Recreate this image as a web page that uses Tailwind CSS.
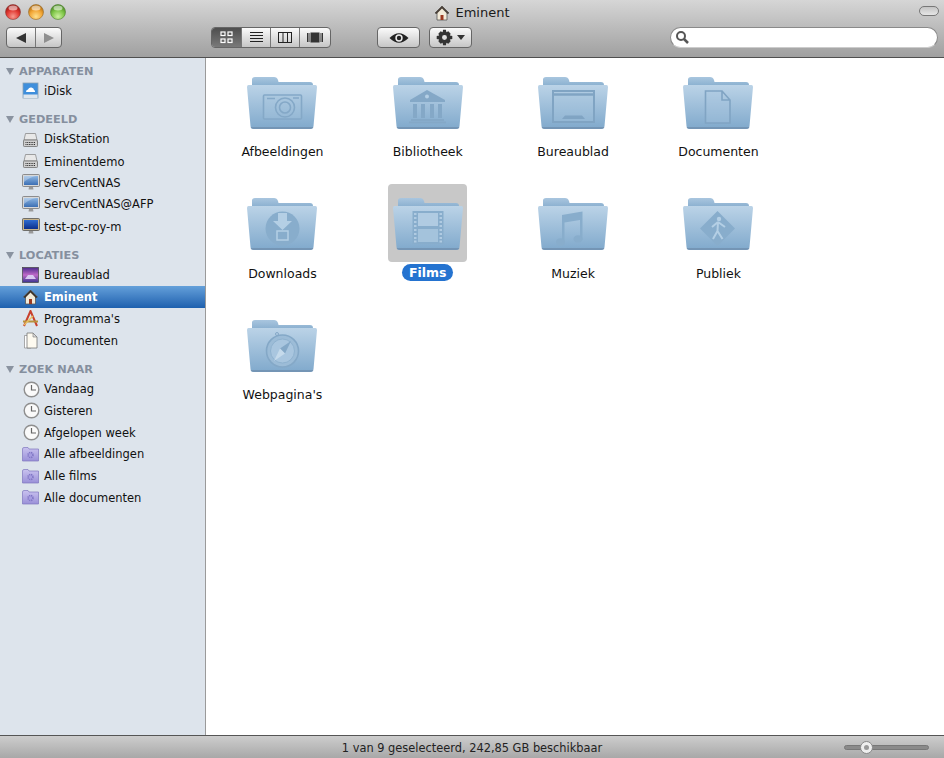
<!DOCTYPE html>
<html>
<head>
    <title>Eminent</title>
    <script src="https://cdn.jsdelivr.net/npm/@tailwindcss/browser@4"></script>
</head>

<body class="w-[944px] h-[758px] overflow-hidden bg-white text-[#111] font-['DejaVu_Sans',sans-serif] flex flex-col">

<!-- shared gradients and icons -->
<svg width="0" height="0" class="absolute">
    <defs>
        <linearGradient id="folderFront" x1="0" y1="0" x2="0" y2="1">
            <stop offset="0" stop-color="#bbd3e7"/>
            <stop offset="1" stop-color="#80a9cc"/>
        </linearGradient>
        <linearGradient id="folderBack" x1="0" y1="0" x2="0" y2="1">
            <stop offset="0" stop-color="#a9c6df"/>
            <stop offset="1" stop-color="#7fa8ca"/>
        </linearGradient>
        <radialGradient id="red" cx="0.5" cy="0.8" r="0.7">
            <stop offset="0" stop-color="#f79a8e"/>
            <stop offset="0.6" stop-color="#e23a33"/>
            <stop offset="1" stop-color="#a01a16"/>
        </radialGradient>
        <radialGradient id="amber" cx="0.5" cy="0.8" r="0.7">
            <stop offset="0" stop-color="#fde08c"/>
            <stop offset="0.6" stop-color="#f2a636"/>
            <stop offset="1" stop-color="#b87212"/>
        </radialGradient>
        <radialGradient id="green" cx="0.5" cy="0.8" r="0.7">
            <stop offset="0" stop-color="#cdf0a0"/>
            <stop offset="0.6" stop-color="#7fc648"/>
            <stop offset="1" stop-color="#4f8e26"/>
        </radialGradient>
        <linearGradient id="screen" x1="0" y1="0" x2="0" y2="1">
            <stop offset="0" stop-color="#8db6e2"/>
            <stop offset="1" stop-color="#3c6fb4"/>
        </linearGradient>
        <linearGradient id="screenDark" x1="0" y1="0" x2="0" y2="1">
            <stop offset="0" stop-color="#2f6cd0"/>
            <stop offset="1" stop-color="#0c2f8c"/>
        </linearGradient>
        <linearGradient id="smart" x1="0" y1="0" x2="0" y2="1">
            <stop offset="0" stop-color="#c9c2ef"/>
            <stop offset="1" stop-color="#9a90d8"/>
        </linearGradient>
        <linearGradient id="desk" x1="0" y1="0" x2="0" y2="1">
            <stop offset="0" stop-color="#4a2a8c"/>
            <stop offset="0.5" stop-color="#c06ac8"/>
            <stop offset="1" stop-color="#3a3390"/>
        </linearGradient>

        <symbol id="folder" viewBox="0 0 70 52">
            <path d="M5 7 L5 2.500 Q5 0 8 0 L27 0 Q30 0 31 3 L31.500 5 L63 5 Q66 5 66 8 L66 12 L5 12 Z" fill="url(#folderBack)"/>
            <path d="M1.500 8 L68.500 8 Q70 8 70 10 L66.500 49 Q66.300 52 63 52 L7 52 Q3.700 52 3.500 49 L0 10 Q0 8 1.500 8 Z" fill="url(#folderFront)"/>
            <path d="M3.600 50 Q4 52 7 52 L63 52 Q66 52 66.400 50 Z" fill="#7495b5"/>
        </symbol>

        <symbol id="clock" viewBox="0 0 17 17">
            <circle cx="8.500" cy="8.500" r="7.300" fill="#fafafa" stroke="#8e8e8e" stroke-width="1.400"/>
            <path d="M8.500 4 V9 H13" fill="none" stroke="#666" stroke-width="1.200"/>
        </symbol>
        <symbol id="nas" viewBox="0 0 16 16">
            <path d="M3 1.500 H13 L14.500 8 H1.500 Z" fill="#e8e8e8" stroke="#8a8a8a" stroke-width="0.800"/>
            <rect x="1" y="8" width="14" height="6.500" rx="0.800" fill="#cfcfcf" stroke="#6f6f6f" stroke-width="0.800"/>
            <path d="M3 10.500 H13 M3 12.500 H13" stroke="#333" stroke-width="1" stroke-dasharray="1 0.700"/>
        </symbol>
        <symbol id="imac" viewBox="0 0 18 17">
            <rect x="0.500" y="0.500" width="17" height="12" rx="1" fill="#d8d8d8" stroke="#777" stroke-width="0.800"/>
            <rect x="2" y="2" width="14" height="9" fill="url(#screen)"/>
            <path d="M2 8 Q8 3 14 2 H2 Z" fill="#fff" opacity="0.300"/>
            <path d="M7 13 H11 L11.500 15.500 H6.500 Z" fill="#999"/>
        </symbol>
        <symbol id="smartFolder" viewBox="0 0 17 16">
            <path d="M0.500 3 Q0.500 1.500 2 1.500 H6 L7 3 H16.500 V15 H0.500 Z" fill="url(#smart)" stroke="#8077be" stroke-width="0.700"/>
            <circle cx="8.500" cy="9" r="2.500" fill="#a69de0" stroke="#7f75c4" stroke-width="1.500" stroke-dasharray="1.200 0.800"/>
        </symbol>
    </defs>
</svg>

<!-- TITLE BAR -->
<div class="h-[58px] shrink-0 border-b border-[#4f4f4f] bg-gradient-to-b from-[#d6d6d6] to-[#a0a0a0]">
    <div class="h-[27px] grid grid-cols-[1fr_auto_1fr] items-start">
        <div class="flex gap-[6.500px] pl-[5px] pt-[4px]">
            <svg width="16" height="16"><circle cx="8" cy="8" r="7.500" fill="url(#red)" stroke="#8a3a36" stroke-width="0.600"/><ellipse cx="8" cy="4" rx="4.500" ry="2.500" fill="#fff" opacity="0.550"/></svg>
            <svg width="16" height="16"><circle cx="8" cy="8" r="7.500" fill="url(#amber)" stroke="#966a2a" stroke-width="0.600"/><ellipse cx="8" cy="4" rx="4.500" ry="2.500" fill="#fff" opacity="0.550"/></svg>
            <svg width="16" height="16"><circle cx="8" cy="8" r="7.500" fill="url(#green)" stroke="#4f7f32" stroke-width="0.600"/><ellipse cx="8" cy="4" rx="4.500" ry="2.500" fill="#fff" opacity="0.550"/></svg>
        </div>
        <div class="flex items-center gap-[5px] h-[24px] pt-[1px] text-[13px] text-[#1a1a1a]">
            <svg width="16" height="16" viewBox="0 0 16 16">
                <path d="M8 1 L15 8 L13 8 V15 H3 V8 H1 Z" fill="#f2ead8" stroke="#555" stroke-width="0.800"/>
                <path d="M8 1 L15 8 L13.500 9 L8 3.500 L2.500 9 L1 8 Z" fill="#4a4038"/>
                <rect x="6.500" y="10" width="3" height="5" fill="#9c3a20"/>
            </svg>
            <span>Eminent</span>
        </div>
        <div class="flex justify-end pr-[5px] pt-[6px]">
            <div class="w-[20px] h-[10px] rounded-full border border-[#777] bg-gradient-to-b from-[#c4c4c4] to-[#e6e6e6]"></div>
        </div>
    </div>

    <!-- TOOLBAR -->
    <div class="h-[21px] flex pl-[6px]">
        <div class="flex w-[56px] h-full rounded-[4px] border border-[#666] bg-gradient-to-b from-[#fbfbfb] to-[#c6c6c6] divide-x divide-[#777]">
            <div class="w-[29px] flex items-center justify-center">
                <svg width="10" height="10" viewBox="0 0 10 10"><path d="M0 5 L10 0 V10 Z" fill="#333"/></svg>
            </div>
            <div class="flex-1 flex items-center justify-center">
                <svg width="10" height="10" viewBox="0 0 10 10"><path d="M10 5 L0 0 V10 Z" fill="#8f8f8f"/></svg>
            </div>
        </div>

        <div class="ml-[149px] flex w-[120px] h-full rounded-[4px] border border-[#666] overflow-hidden bg-gradient-to-b from-[#fbfbfb] to-[#c6c6c6] divide-x divide-[#777]">
            <div class="w-[30px] flex items-center justify-center bg-gradient-to-b from-[#4e4e4e] to-[#7a7a7a]">
                <svg width="13" height="13" viewBox="0 0 13 13" fill="none" stroke="#fff" stroke-width="1.200"><rect x="1" y="1" width="4" height="3.500"/><rect x="8" y="1" width="4" height="3.500"/><rect x="1" y="8" width="4" height="3.500"/><rect x="8" y="8" width="4" height="3.500"/></svg>
            </div>
            <div class="w-[29px] flex items-center justify-center">
                <svg width="13" height="13" viewBox="0 0 13 13" stroke="#222" stroke-width="1"><path d="M0 1.500 H13 M0 4.500 H13 M0 7.500 H13 M0 10.500 H13"/></svg>
            </div>
            <div class="w-[29px] flex items-center justify-center">
                <svg width="14" height="11" viewBox="0 0 14 11" fill="none" stroke="#222" stroke-width="1"><rect x="0.500" y="0.500" width="13" height="10"/><path d="M5 0.500 V10.500 M9.500 0.500 V10.500"/></svg>
            </div>
            <div class="flex-1 flex items-center justify-center">
                <svg width="16" height="11" viewBox="0 0 16 11"><rect x="3.500" y="0.500" width="9" height="10" fill="#333"/><path d="M0.500 1 V10 M2 1 V10 M14 1 V10 M15.500 1 V10" stroke="#333" stroke-width="1"/></svg>
            </div>
        </div>

        <div class="ml-[46px] w-[43px] h-full rounded-[4px] border border-[#666] bg-gradient-to-b from-[#fbfbfb] to-[#c6c6c6] flex items-center justify-center">
            <svg width="20" height="12" viewBox="0 0 20 12">
                <path d="M0.500 6 Q10 -3.500 19.500 6 Q10 15.500 0.500 6 Z" fill="#222"/>
                <circle cx="10" cy="6" r="3.700" fill="#eee"/>
                <circle cx="10" cy="6" r="2.200" fill="#222"/>
            </svg>
        </div>

        <div class="ml-[9px] w-[43px] h-full rounded-[4px] border border-[#666] bg-gradient-to-b from-[#fbfbfb] to-[#c6c6c6] flex items-center justify-center gap-[4px]">
            <svg width="17" height="17" viewBox="0 0 24 24">
                <path fill="#333" fill-rule="evenodd" d="M10 1 H14 L14.700 4.500 L17.400 3.300 L20.700 6.600 L19.500 9.300 L23 10 V14 L19.500 14.700 L20.700 17.400 L17.400 20.700 L14.700 19.500 L14 23 H10 L9.300 19.500 L6.600 20.700 L3.300 17.400 L4.500 14.700 L1 14 V10 L4.500 9.300 L3.300 6.600 L6.600 3.300 L9.300 4.500 Z M12 8.500 A3.500 3.500 0 1 0 12 15.500 A3.500 3.500 0 1 0 12 8.500 Z"/>
            </svg>
            <svg width="8" height="5" viewBox="0 0 8 5"><path d="M0 0 H8 L4 5 Z" fill="#333"/></svg>
        </div>

        <div class="ml-[198px] w-[268px] h-full rounded-full bg-white border border-[#8a8a8a] border-b-[#ccc] flex items-center pl-[4px]">
            <svg width="15" height="15" viewBox="0 0 15 15" fill="none" stroke="#555" stroke-width="2"><circle cx="6" cy="6" r="4"/><path d="M9 9 L13 13" stroke-width="2.500"/></svg>
        </div>
    </div>
</div>

<div class="flex-1 flex min-h-0">

    <!-- SIDEBAR -->
    <div class="w-[206px] shrink-0 bg-[#dde4ec] border-r border-[#9a9a9a] pt-[4px] text-[11.500px]">

        <div class="h-[18px] flex items-center pl-[6px] gap-[5px] text-[11.300px] font-bold text-[#858f9e]">
            <svg width="8" height="7" viewBox="0 0 8 7"><path d="M0 0 H8 L4 7 Z" fill="#8a93a0"/></svg>
            <span class="pt-[2px]">APPARATEN</span>
        </div>
        <div class="h-[21.700px] flex items-center pl-[22px] gap-[5px]">
            <svg width="17" height="17" viewBox="0 0 17 17">
                <rect x="1" y="1" width="15" height="15" fill="#3f8fdc" stroke="#8aa0b5" stroke-width="0.800"/>
                <rect x="1.400" y="12.500" width="14.200" height="3.500" fill="#dfe6ec"/>
                <path d="M4 10 Q4 7.500 6 7.500 Q7 5 9.500 5.500 Q12 6 12 8 Q13.500 8.500 13 10 Z" fill="#fff"/>
            </svg>
            <span class="pt-[1px]">iDisk</span>
        </div>

        <div class="h-[18px] mt-[9px] flex items-center pl-[6px] gap-[5px] text-[11.300px] font-bold text-[#858f9e]">
            <svg width="8" height="7" viewBox="0 0 8 7"><path d="M0 0 H8 L4 7 Z" fill="#8a93a0"/></svg>
            <span class="pt-[2px]">GEDEELD</span>
        </div>
        <div class="h-[21.700px] flex items-center pl-[22px] gap-[5px]"><svg width="17" height="16"><use href="#nas"/></svg><span class="pt-[1px]">DiskStation</span></div>
        <div class="h-[21.700px] flex items-center pl-[22px] gap-[5px]"><svg width="17" height="16"><use href="#nas"/></svg><span class="pt-[2px]">Eminentdemo</span></div>
        <div class="h-[21.700px] flex items-center pl-[22px] gap-[4px]"><svg width="18" height="17"><use href="#imac"/></svg><span class="pt-[2px]">ServCentNAS</span></div>
        <div class="h-[21.700px] flex items-center pl-[22px] gap-[4px]"><svg width="18" height="17"><use href="#imac"/></svg><span class="pt-[1px]">ServCentNAS@AFP</span></div>
        <div class="h-[21.700px] flex items-center pl-[22px] gap-[4px]">
            <svg width="18" height="17" viewBox="0 0 18 17">
                <rect x="0.500" y="0.500" width="17" height="12" rx="1" fill="#c8b48a" stroke="#555" stroke-width="0.800"/>
                <rect x="2" y="2" width="14" height="9" fill="url(#screenDark)"/>
                <path d="M7 13 H11 L11.500 15.500 H6.500 Z" fill="#999"/>
            </svg>
            <span class="pt-[2px]">test-pc-roy-m</span>
        </div>

        <div class="h-[18px] mt-[9px] flex items-center pl-[6px] gap-[5px] text-[11.300px] font-bold text-[#858f9e]">
            <svg width="8" height="7" viewBox="0 0 8 7"><path d="M0 0 H8 L4 7 Z" fill="#8a93a0"/></svg>
            <span class="pt-[2px]">LOCATIES</span>
        </div>
        <div class="h-[21.700px] flex items-center pl-[22px] gap-[5px]">
            <svg width="17" height="16" viewBox="0 0 17 16">
                <rect x="0.500" y="0.500" width="16" height="15" fill="url(#desk)" stroke="#444" stroke-width="0.700"/>
                <path d="M3 12 L6 8 H11 L14 12 Z" fill="#d8c8f0"/>
            </svg>
            <span class="pt-[2px]">Bureaublad</span>
        </div>
        <div class="h-[22px] flex items-center pl-[22px] gap-[5px] bg-gradient-to-b from-[#64a0da] to-[#1d60ae] text-white font-bold">
            <svg width="17" height="16" viewBox="0 0 16 16">
                <path d="M8 1 L15 8 L13 8 V15 H3 V8 H1 Z" fill="#f2ead8" stroke="#555" stroke-width="0.800"/>
                <path d="M8 1 L15 8 L13.500 9 L8 3.500 L2.500 9 L1 8 Z" fill="#3a3028"/>
                <rect x="6.500" y="10" width="3" height="5" fill="#9c3a20"/>
            </svg>
            <span class="pt-[1px]">Eminent</span>
        </div>
        <div class="h-[21.700px] flex items-center pl-[22px] gap-[5px]">
            <svg width="17" height="17" viewBox="0 0 17 17" fill="none">
                <path d="M2 16 L8.500 1 L15 16" stroke="#c8402c" stroke-width="2"/>
                <path d="M1 11.500 H16" stroke="#b8923c" stroke-width="2"/>
                <path d="M2 15 L11 6" stroke="#e8c060" stroke-width="1.500"/>
            </svg>
            <span class="pt-[1px]">Programma's</span>
        </div>
        <div class="h-[21.700px] flex items-center pl-[22px] gap-[5px]">
            <svg width="17" height="17" viewBox="0 0 17 17">
                <path d="M2.500 3.500 H9 L9 16 H2.500 Z" fill="#fff" stroke="#888" stroke-width="0.700"/>
                <path d="M5 1 H11 L15 5 V16 H5 Z" fill="#fdfaf0" stroke="#777" stroke-width="0.800"/>
                <path d="M11 1 V5 H15 Z" fill="#ddd" stroke="#777" stroke-width="0.600"/>
            </svg>
            <span class="pt-[2px]">Documenten</span>
        </div>

        <div class="h-[18px] mt-[9px] flex items-center pl-[6px] gap-[5px] text-[11.300px] font-bold text-[#858f9e]">
            <svg width="8" height="7" viewBox="0 0 8 7"><path d="M0 0 H8 L4 7 Z" fill="#8a93a0"/></svg>
            <span class="pt-[2px]">ZOEK NAAR</span>
        </div>
        <div class="h-[21.700px] flex items-center pl-[23px] gap-[4px]"><svg width="17" height="17"><use href="#clock"/></svg><span class="pt-[2px]">Vandaag</span></div>
        <div class="h-[21.700px] flex items-center pl-[23px] gap-[4px]"><svg width="17" height="17"><use href="#clock"/></svg><span class="pt-[2px]">Gisteren</span></div>
        <div class="h-[21.700px] flex items-center pl-[23px] gap-[4px]"><svg width="17" height="17"><use href="#clock"/></svg><span class="pt-[2px]">Afgelopen week</span></div>
        <div class="h-[21.700px] flex items-center pl-[22px] gap-[5px]"><svg width="17" height="16"><use href="#smartFolder"/></svg><span class="pt-[2px]">Alle afbeeldingen</span></div>
        <div class="h-[21.700px] flex items-center pl-[22px] gap-[5px]"><svg width="17" height="16"><use href="#smartFolder"/></svg><span class="pt-[2px]">Alle films</span></div>
        <div class="h-[21.700px] flex items-center pl-[22px] gap-[5px]"><svg width="17" height="16"><use href="#smartFolder"/></svg><span class="pt-[2px]">Alle documenten</span></div>
    </div>

    <!-- FOLDERS -->
    <div class="flex-1 pl-[3.800px] pt-[4.900px] grid grid-cols-[repeat(4,145.330px)] auto-rows-[121.500px] content-start text-[12.500px]">

        <div class="flex flex-col items-center">
            <div class="w-[79px] h-[78px] pt-[2px] flex items-center justify-center">
                <svg width="70" height="52" viewBox="0 0 70 52">
                    <use href="#folder" width="70" height="52"/>
                    <g fill="none" stroke="#84a8c7" stroke-width="1.600">
                        <rect x="16.500" y="18" width="38" height="24" rx="1" fill="#a9c6df" fill-opacity="0.300"/>
                        <circle cx="38" cy="30.500" r="9.500"/>
                        <circle cx="38" cy="30.500" r="5.500"/>
                        <path d="M20 21.500 H28 M46 21 H52"/>
                    </g>
                </svg>
            </div>
            <div class="h-[17px] mt-[2px] pt-[2px] flex items-center">Afbeeldingen</div>
        </div>

        <div class="flex flex-col items-center">
            <div class="w-[79px] h-[78px] pt-[2px] flex items-center justify-center">
                <svg width="70" height="52" viewBox="0 0 70 52">
                    <use href="#folder" width="70" height="52"/>
                    <g fill="#84a8c7">
                        <path d="M34 13 L52 23 V25 H17 V23 Z"/>
                        <rect x="20" y="27" width="4" height="14"/>
                        <rect x="28" y="27" width="4" height="14"/>
                        <rect x="37" y="27" width="4" height="14"/>
                        <rect x="45" y="27" width="4" height="14"/>
                        <rect x="18" y="42" width="33" height="2"/>
                        <rect x="16" y="44.500" width="37" height="1.800"/>
                    </g>
                    <circle cx="34" cy="19.500" r="2" fill="#b4cfe5"/>
                </svg>
            </div>
            <div class="h-[17px] mt-[2px] pt-[2px] flex items-center">Bibliotheek</div>
        </div>

        <div class="flex flex-col items-center">
            <div class="w-[79px] h-[78px] pt-[2px] flex items-center justify-center">
                <svg width="70" height="52" viewBox="0 0 70 52">
                    <use href="#folder" width="70" height="52"/>
                    <rect x="15" y="14" width="41" height="31" fill="#a9c6df" fill-opacity="0.300" stroke="#80a4c3" stroke-width="2"/>
                    <path d="M15 17.500 H56" stroke="#80a4c3" stroke-width="2.500"/>
                    <path d="M24 42 L27 38.500 H44 L47 42 Z" fill="#80a4c3"/>
                </svg>
            </div>
            <div class="h-[17px] mt-[2px] pt-[2px] flex items-center">Bureaublad</div>
        </div>

        <div class="flex flex-col items-center">
            <div class="w-[79px] h-[78px] pt-[2px] flex items-center justify-center">
                <svg width="70" height="52" viewBox="0 0 70 52">
                    <use href="#folder" width="70" height="52"/>
                    <path d="M22.500 14 H39 L47 23 V46 H22.500 Z M39 14 V23 H47" fill="#a9c6df" fill-opacity="0.350" stroke="#80a4c3" stroke-width="1.600"/>
                </svg>
            </div>
            <div class="h-[17px] mt-[2px] pt-[2px] flex items-center">Documenten</div>
        </div>

        <div class="flex flex-col items-center">
            <div class="w-[79px] h-[78px] pt-[2px] flex items-center justify-center">
                <svg width="70" height="52" viewBox="0 0 70 52">
                    <use href="#folder" width="70" height="52"/>
                    <circle cx="35.500" cy="30.500" r="17" fill="#88adcc"/>
                    <path d="M31 15 H40 V23 H45 L35.500 32 L26 23 H31 Z" fill="#b4cfe5"/>
                    <rect x="30" y="33" width="11" height="9" fill="#88adcc" stroke="#b4cfe5" stroke-width="1.500"/>
                </svg>
            </div>
            <div class="h-[17px] mt-[2px] pt-[2px] flex items-center">Downloads</div>
        </div>

        <div class="flex flex-col items-center">
            <div class="w-[79px] h-[78px] pt-[2px] rounded-[4px] bg-[#c8c8c8] flex items-center justify-center">
                <svg width="70" height="52" viewBox="0 0 70 52">
                    <use href="#folder" width="70" height="52"/>
                    <rect x="19.500" y="13" width="31" height="33" fill="#88adcc"/>
                    <rect x="25" y="15" width="20" height="13" fill="#b0cbe2"/>
                    <rect x="25" y="31" width="20" height="13" fill="#a4c3dc"/>
                    <path d="M21 16 H23.500 M21 20 H23.500 M21 24 H23.500 M21 28 H23.500 M21 32 H23.500 M21 36 H23.500 M21 40 H23.500 M21 43.500 H23.500 M46.500 16 H49 M46.500 20 H49 M46.500 24 H49 M46.500 28 H49 M46.500 32 H49 M46.500 36 H49 M46.500 40 H49 M46.500 43.500 H49" stroke="#b0cbe2" stroke-width="2"/>
                </svg>
            </div>
            <div class="h-[17px] mt-[2px] w-[51px] rounded-full bg-[#2473d0] text-white font-bold flex items-center justify-center">Films</div>
        </div>

        <div class="flex flex-col items-center">
            <div class="w-[79px] h-[78px] pt-[2px] flex items-center justify-center">
                <svg width="70" height="52" viewBox="0 0 70 52">
                    <use href="#folder" width="70" height="52"/>
                    <g fill="#88adcc">
                        <path d="M24 17 L44.500 13.500 V42 H42 V22 L26.500 24.500 V45 H24 Z"/>
                        <ellipse cx="22.500" cy="44" rx="4.500" ry="3.800"/>
                        <ellipse cx="40" cy="41" rx="4.500" ry="3.800"/>
                    </g>
                </svg>
            </div>
            <div class="h-[17px] mt-[2px] pt-[2px] flex items-center">Muziek</div>
        </div>

        <div class="flex flex-col items-center">
            <div class="w-[79px] h-[78px] pt-[2px] flex items-center justify-center">
                <svg width="70" height="52" viewBox="0 0 70 52">
                    <use href="#folder" width="70" height="52"/>
                    <path d="M34.500 13 L52 30.500 L34.500 48 L17 30.500 Z" fill="#88adcc"/>
                    <circle cx="36" cy="21" r="2.200" fill="#b4cfe5"/>
                    <path d="M35 24 L29 29 M35 24 L42 29 M35 24 L34.500 33 L30 41 M34.500 33 L39.500 41" fill="none" stroke="#b4cfe5" stroke-width="2"/>
                </svg>
            </div>
            <div class="h-[17px] mt-[2px] pt-[2px] flex items-center">Publiek</div>
        </div>

        <div class="flex flex-col items-center">
            <div class="w-[79px] h-[78px] pt-[2px] flex items-center justify-center">
                <svg width="70" height="52" viewBox="0 0 70 52">
                    <use href="#folder" width="70" height="52"/>
                    <circle cx="35.500" cy="31" r="16" fill="#9cbcd7" stroke="#84a8c7" stroke-width="1.600"/>
                    <circle cx="35.500" cy="31" r="12" fill="#a9c6df" stroke="#8fb2cf" stroke-width="1"/>
                    <path d="M44 21 L38 33.500 L33 28.500 Z" fill="#84a8c7"/>
                    <path d="M27 41 L33 28.500 L38 33.500 Z" fill="#c5daeb"/>
                    <circle cx="30" cy="14" r="1.500" fill="none" stroke="#84a8c7"/>
                </svg>
            </div>
            <div class="h-[17px] mt-[2px] pt-[2px] flex items-center">Webpagina's</div>
        </div>
    </div>
</div>

<!-- STATUS BAR -->
<div class="h-[23px] shrink-0 border-t border-[#555] bg-gradient-to-b from-[#cdcdcd] to-[#a8a8a8] grid grid-cols-[1fr_auto_1fr] items-center text-[11.400px] text-[#222]">
    <div></div>
    <div class="pt-[3px]">1 van 9 geselecteerd, 242,85 GB beschikbaar</div>
    <div class="flex items-center justify-end">
        <div class="relative w-[85px] h-[5px] rounded-full bg-[#8a8a8a] border border-[#777] mr-[15px]">
            <div class="absolute left-[15px] -top-[5px] w-[13px] h-[13px] rounded-full bg-[#eee] border border-[#888] flex items-center justify-center">
                <div class="w-[5px] h-[5px] rounded-full bg-[#999]"></div>
            </div>
        </div>
    </div>
</div>

</body>
</html>
